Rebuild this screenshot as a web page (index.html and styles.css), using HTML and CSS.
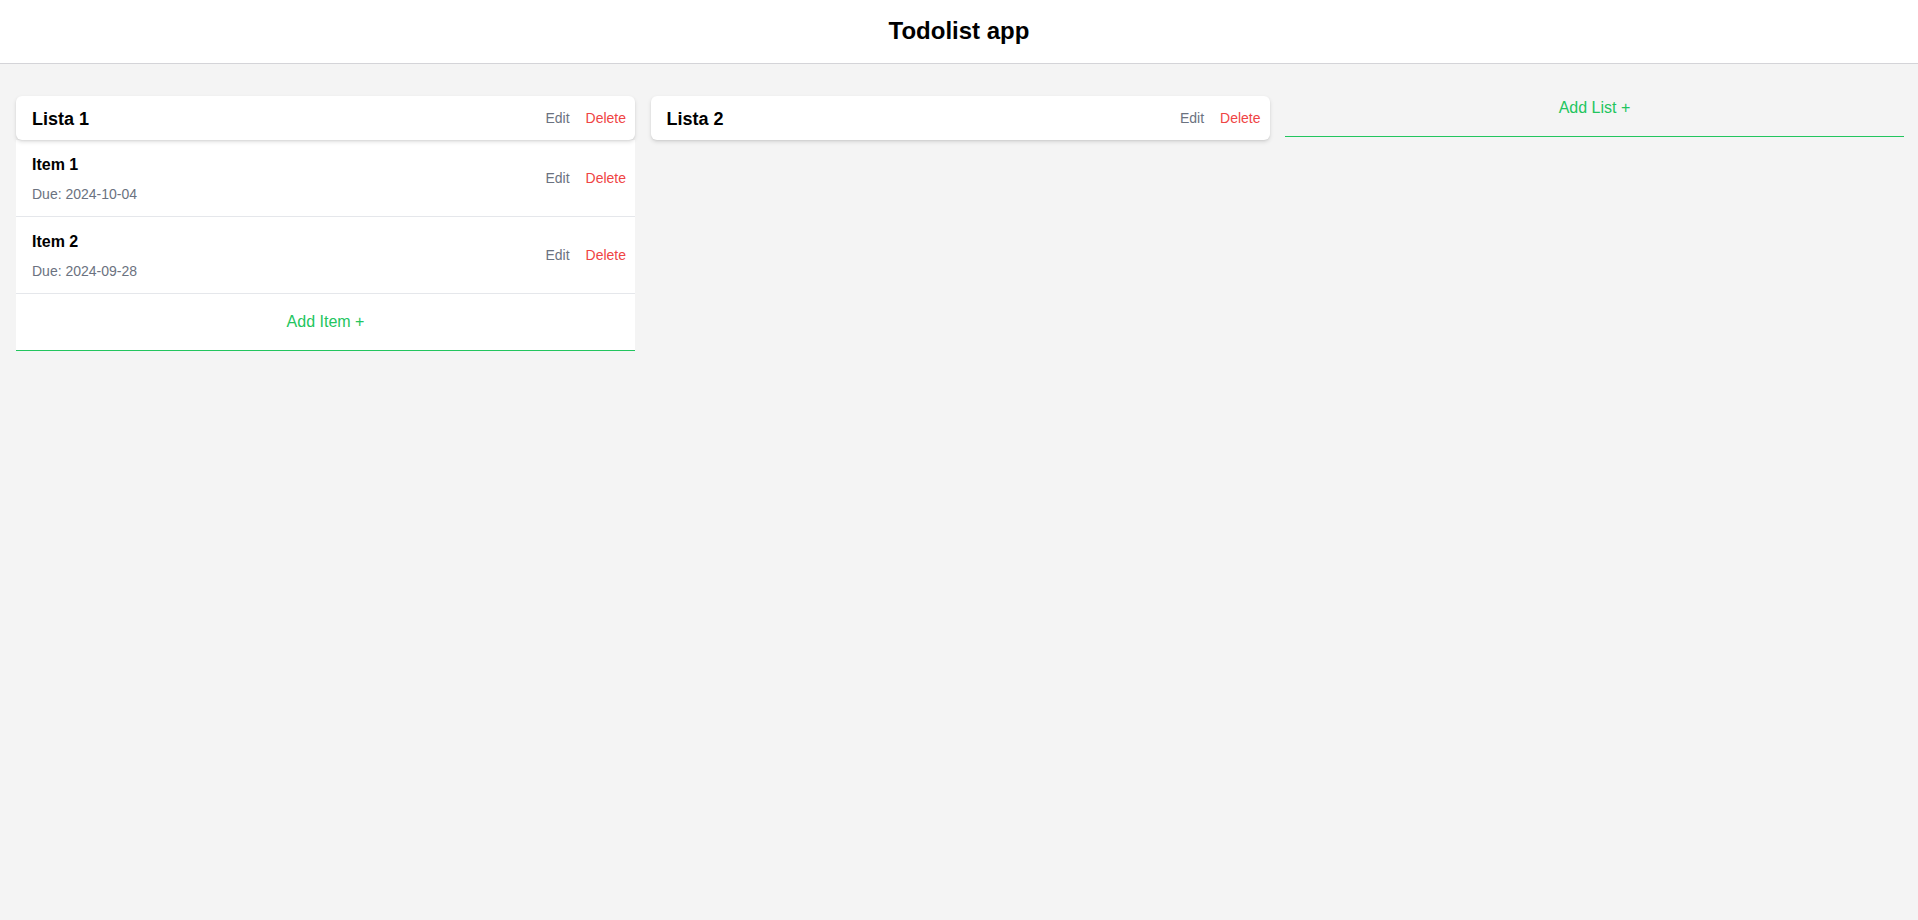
FILE: index.html
```html
<!DOCTYPE html>
<html lang="en">
<head>
<meta charset="utf-8">
<title>Todolist app</title>
<link rel="stylesheet" href="styles.css">
</head>
<body>
<header class="topbar">
  <h1 class="app-title">Todolist app</h1>
</header>
<main class="board">
  <section class="list">
    <div class="list-head">
      <h2 class="list-title">Lista 1</h2>
      <div class="actions">
        <button class="btn btn-edit">Edit</button>
        <button class="btn btn-delete">Delete</button>
      </div>
    </div>
    <ul class="items">
      <li class="item">
        <div class="item-info">
          <h3 class="item-title">Item 1</h3>
          <p class="item-due">Due: 2024-10-04</p>
        </div>
        <div class="actions">
          <button class="btn btn-edit">Edit</button>
          <button class="btn btn-delete">Delete</button>
        </div>
      </li>
      <li class="item">
        <div class="item-info">
          <h3 class="item-title">Item 2</h3>
          <p class="item-due">Due: 2024-09-28</p>
        </div>
        <div class="actions">
          <button class="btn btn-edit">Edit</button>
          <button class="btn btn-delete">Delete</button>
        </div>
      </li>
    </ul>
    <button class="add-item">Add Item +</button>
  </section>
  <section class="list">
    <div class="list-head">
      <h2 class="list-title">Lista 2</h2>
      <div class="actions">
        <button class="btn btn-edit">Edit</button>
        <button class="btn btn-delete">Delete</button>
      </div>
    </div>
  </section>
  <div class="list">
    <button class="add-list">Add List +</button>
  </div>
</main>
</body>
</html>
```
FILE: styles.css
```css
* { box-sizing: border-box; }
html, body { margin: 0; padding: 0; }
body {
  font-family: "Liberation Sans", Arial, sans-serif;
  background: #f4f4f4;
  color: #000;
  min-height: 920px;
}
.topbar {
  background: #fff;
  border-bottom: 1px solid #d4d4d8;
  padding: 15px 0 16px;
  text-align: center;
}
.app-title {
  margin: 0;
  font-size: 24px;
  line-height: 32px;
  font-weight: 700;
}
.board {
  display: grid;
  grid-template-columns: repeat(3, 1fr);
  gap: 15.5px;
  padding: 32px 14px 32px 16px;
  align-items: start;
}
.list {
  display: flex;
  flex-direction: column;
}
.list-head {
  display: flex;
  align-items: center;
  justify-content: space-between;
  height: 44px;
  padding-left: 16px;
  background: #fff;
  border-radius: 6px;
  box-shadow: 0 2px 4px rgba(0, 0, 0, 0.12), 0 1px 2px rgba(0, 0, 0, 0.06);
  position: relative;
  z-index: 1;
}
.list-title {
  margin: 0;
  padding-top: 2px;
  font-size: 18px;
  line-height: 28px;
  font-weight: 700;
}
.actions {
  display: flex;
  align-items: center;
}
.btn {
  font-family: inherit;
  font-size: 14px;
  line-height: 20px;
  background: none;
  border: 0;
  padding: 0 8px;
  margin: 0;
  cursor: pointer;
}
.btn-edit { color: #6b7280; }
.btn-delete { color: #ef4444; padding-right: 9px; }
.items {
  list-style: none;
  margin: 0;
  padding: 0;
}
.item {
  display: flex;
  align-items: center;
  justify-content: space-between;
  background: #fff;
  padding: 12px 0 12px 16px;
  border-bottom: 1px solid #e5e7eb;
}
.item-title {
  margin: 0;
  padding-top: 1px;
  font-size: 16px;
  line-height: 24px;
  font-weight: 700;
}
.item-due {
  margin: 7px 0 0;
  font-size: 14px;
  line-height: 20px;
  color: #6b7280;
}
.add-item {
  font-family: inherit;
  font-size: 16px;
  line-height: 24px;
  color: #22c55e;
  background: #fff;
  border: 0;
  border-bottom: 1px solid #22c55e;
  padding: 16px 0;
  width: 100%;
  cursor: pointer;
}
.add-list {
  font-family: inherit;
  font-size: 16px;
  line-height: 24px;
  color: #22c55e;
  background: transparent;
  border: 0;
  border-bottom: 1px solid #22c55e;
  padding: 0 0 16px;
  width: 100%;
  cursor: pointer;
}
```
